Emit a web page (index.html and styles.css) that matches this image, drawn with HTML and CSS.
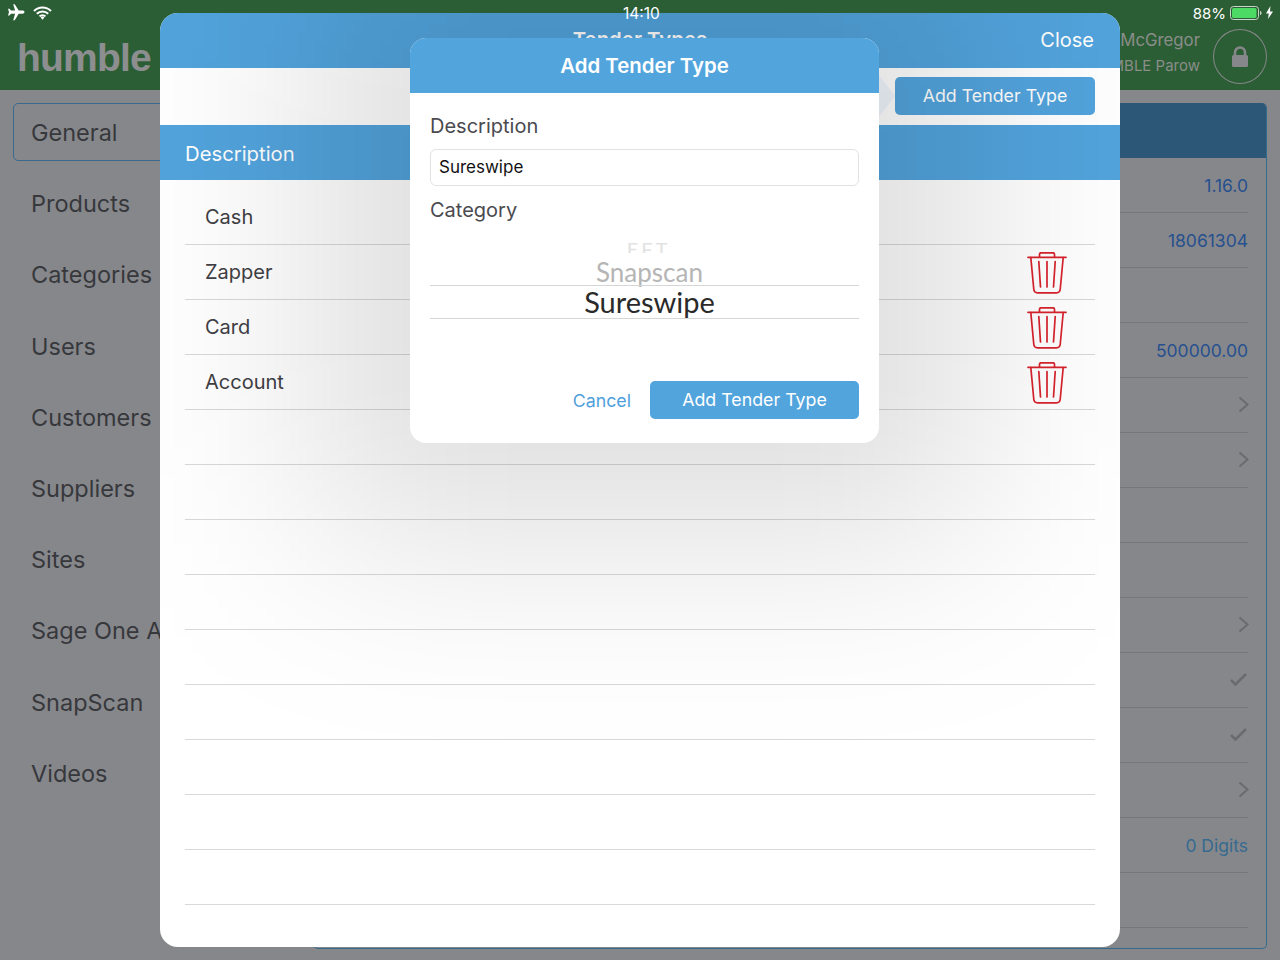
FILE: index.html
```html
<!DOCTYPE html>
<html lang="en">
<head>
  <meta charset="UTF-8">
  <title>Add Tender Type</title>
  <link rel="stylesheet" href="styles.css">
</head>
<body>

<div class="status">
  <div class="status-left">
    <svg width="18" height="17" viewBox="0 0 18 17"><path d="M6.2 0.3h1.5l4 6.2h3.6c1.2 0 2.2.6 2.2 1.6s-1 1.6-2.2 1.6h-3.6l-4 6.6H6.2l1.9-6.6H4L2.4 11.6H1l1-3.5-1-3.4h1.4L4 6.5h4.1z" fill="#fff"/></svg>
    <svg width="19" height="14" viewBox="0 0 19 14"><path d="M1 5a12 12 0 0 1 17 0M3.8 7.8a8 8 0 0 1 11.4 0M6.5 10.4a4.2 4.2 0 0 1 6 0" fill="none" stroke="#fff" stroke-width="2"/><path d="M7.6 11.6a2.6 2.6 0 0 1 3.8 0L9.5 13.8z" fill="#fff"/></svg>
  </div>
  <div class="status-time">14:10</div>
  <div class="status-right">
    <span>88%</span>
    <svg width="32" height="14" viewBox="0 0 32 14"><rect x="0.5" y="0.5" width="28" height="13" rx="3" fill="none" stroke="#c9d6cb"/><rect x="2" y="2" width="24.5" height="10" rx="1.5" fill="#4cd964"/><path d="M30 5v4c1 0 1.5-1 1.5-2s-.5-2-1.5-2z" fill="#c9d6cb"/></svg>
    <svg width="7" height="13" viewBox="0 0 7 13"><path d="M4.4 0L0 7.4h2.8L2 13l5-7.6H4z" fill="#fff"/></svg>
  </div>
</div>

<div class="topbar">
  <div class="logo">humble</div>
  <div class="user">
    <div class="user-text">
      <div class="user-name">McGregor</div>
      <div class="user-site">HUMBLE Parow</div>
    </div>
    <div class="lock">
      <svg width="18" height="22" viewBox="0 0 18 22"><path d="M4 10V6.500a5 5 0 0 1 10 0V10" fill="none" stroke="#86878b" stroke-width="2.600"/><rect x="1" y="9" width="16" height="12" rx="1.500" fill="#86878b"/></svg>
    </div>
  </div>
</div>

<div class="main">
  <ul class="menu">
    <li class="now">General</li>
    <li>Products</li>
    <li>Categories</li>
    <li>Users</li>
    <li>Customers</li>
    <li>Suppliers</li>
    <li>Sites</li>
    <li>Sage One Accounting</li>
    <li>SnapScan</li>
    <li>Videos</li>
  </ul>
  <div class="panel">
    <div class="panel-head"></div>
    <div class="panel-row">1.16.0</div>
    <div class="panel-row">18061304</div>
    <div class="panel-row"></div>
    <div class="panel-row">500000.00</div>
    <div class="panel-row"><svg class="chev" width="11" height="17" viewBox="0 0 11 17"><path d="M1.500 1.500l8 7-8 7" fill="none" stroke="#6a6b6f" stroke-width="2"/></svg></div>
    <div class="panel-row"><svg class="chev" width="11" height="17" viewBox="0 0 11 17"><path d="M1.500 1.500l8 7-8 7" fill="none" stroke="#6a6b6f" stroke-width="2"/></svg></div>
    <div class="panel-row"></div>
    <div class="panel-row"></div>
    <div class="panel-row"><svg class="chev" width="11" height="17" viewBox="0 0 11 17"><path d="M1.500 1.500l8 7-8 7" fill="none" stroke="#6a6b6f" stroke-width="2"/></svg></div>
    <div class="panel-row"><svg class="tick" width="17" height="13" viewBox="0 0 17 13"><path d="M1 7l4.500 4.500L16 1" fill="none" stroke="#6a6b6f" stroke-width="2.600"/></svg></div>
    <div class="panel-row"><svg class="tick" width="17" height="13" viewBox="0 0 17 13"><path d="M1 7l4.500 4.500L16 1" fill="none" stroke="#6a6b6f" stroke-width="2.600"/></svg></div>
    <div class="panel-row"><svg class="chev" width="11" height="17" viewBox="0 0 11 17"><path d="M1.500 1.500l8 7-8 7" fill="none" stroke="#6a6b6f" stroke-width="2"/></svg></div>
    <div class="panel-row digits">0 Digits</div>
    <div class="panel-row"></div>
  </div>
</div>

<div class="sheet">
  <div class="sheet-head">
    <span class="sheet-title">Tender Types</span>
    <span class="sheet-close">Close</span>
  </div>
  <div class="sheet-tools">
    <a href="#" class="btn tools-btn">Add Tender Type</a>
  </div>
  <div class="table-head">Description</div>
  <div class="table">
    <div class="table-row">Cash</div>
    <div class="table-row">Zapper
      <svg class="trash" width="40" height="42" viewBox="0 0 40 42"><use href="#bin"/></svg>
    </div>
    <div class="table-row">Card
      <svg class="trash" width="40" height="42" viewBox="0 0 40 42"><use href="#bin"/></svg>
    </div>
    <div class="table-row">Account
      <svg class="trash" width="40" height="42" viewBox="0 0 40 42"><use href="#bin"/></svg>
    </div>
    <div class="table-row"></div>
    <div class="table-row"></div>
    <div class="table-row"></div>
    <div class="table-row"></div>
    <div class="table-row"></div>
    <div class="table-row"></div>
    <div class="table-row"></div>
    <div class="table-row"></div>
    <div class="table-row"></div>
  </div>

  <div class="dialog-shade"></div>
  <div class="dialog">
    <div class="dialog-head">Add Tender Type</div>
    <div class="dialog-body">
      <div class="label">Description</div>
      <div class="input">Sureswipe</div>
      <div class="label label-cat">Category</div>
      <div class="picker">
        <div class="pick pick-far"><span>EFT</span></div>
        <div class="pick pick-near">Snapscan</div>
        <div class="pick pick-now">Sureswipe</div>
      </div>
      <div class="dialog-foot">
        <a href="#" class="cancel">Cancel</a>
        <a href="#" class="btn foot-btn">Add Tender Type</a>
      </div>
    </div>
  </div>
</div>

<svg class="defs" width="0" height="0">
  <g id="bin" fill="none" stroke="#d8232d" stroke-width="1.700" stroke-linecap="round">
    <path d="M1 5.300H39"/>
    <path d="M12.500 5V2.200Q12.500 .8 14 .8H26Q27.500 .8 27.500 2.200V5"/>
    <path d="M3.800 5.500L6.800 37.500Q7.200 40.800 10.500 40.800H29.500Q32.800 40.800 33.200 37.500L36.200 5.500"/>
    <path d="M11.800 9.500L13.500 35M20 9.500V35M28.200 9.500L26.500 35"/>
  </g>
</svg>

</body>
</html>
```

FILE: styles.css
```css
* {
  margin: 0;
  padding: 0;
  list-style: none;
  box-sizing: border-box;
}
body {
  width: 1280px;
  height: 960px;
  overflow: hidden;
  position: relative;
  background-color: #86878b;
  font-family: "Inter", "Liberation Sans", sans-serif;
  color: #37383c;
}
a {
  text-decoration: none;
}

/* status bar */
.status {
  position: absolute;
  top: 0;
  left: 0;
  width: 100%;
  height: 26px;
  padding: 4px 7px 0 7px;
  display: flex;
  justify-content: space-between;
  z-index: 10;
  color: #fff;
  font-size: 15px;
}
.status-left {
  display: flex;
  gap: 8px;
}
.status-left svg + svg {
  margin-top: 2px;
}
.status-time {
  position: absolute;
  left: 623px;
  top: 4px;
  font-size: 15.500px;
}
.status-right {
  display: flex;
  gap: 4px;
}
.status-right svg {
  margin-top: 2px;
}

/* green bar */
.topbar {
  height: 90px;
  background-color: #2c5e35;
  display: flex;
  justify-content: space-between;
  padding: 29px 13px 0 17px;
}
.logo {
  font-family: "Liberation Sans", sans-serif;
  font-weight: bold;
  font-size: 39px;
  letter-spacing: -.8px;
  line-height: 58px;
  color: #8d8e90;
}
.user {
  display: flex;
  gap: 13px;
}
.user-text {
  text-align: right;
  color: #8a8d8a;
}
.user-name {
  font-size: 16.800px;
  line-height: 22px;
}
.user-site {
  font-size: 15px;
  line-height: 18px;
  margin-top: 6px;
}
.lock {
  width: 54px;
  height: 55px;
  border: 1px solid #86878b;
  border-radius: 50%;
  display: flex;
  align-items: center;
  justify-content: center;
}

/* page behind the sheet */
.main {
  display: flex;
  padding: 13px 13px 0 13px;
}
.menu {
  width: 300px;
  display: flex;
  flex-direction: column;
  gap: 13.2px;
}
.menu li {
  height: 58px;
  line-height: 58px;
  padding-left: 17px;
  font-size: 23.500px;
  border: 1px solid transparent;
  white-space: nowrap;
}
.menu li.now {
  border-color: #3a6a8c;
  border-radius: 5px;
}
.panel {
  flex: 1;
  height: 846px;
  border: 1.500px solid #346a8e;
  border-top: 0;
  border-radius: 5px;
  overflow: hidden;
}
.panel-head {
  height: 55px;
  background-color: #2c5777;
}
.panel-row {
  height: 55px;
  margin-right: 18px;
  border-bottom: 1.500px solid #76777b;
  display: flex;
  align-items: center;
  justify-content: flex-end;
  font-size: 17.500px;
  color: #27508f;
}
.tick {
  margin: -2px 1px 0 0;
}
.chev {
  margin: -2px -1px 0 0;
}
.digits {
  color: #356a90;
}

/* tender types sheet */
.sheet {
  position: absolute;
  left: 160px;
  top: 13px;
  width: 960px;
  height: 934px;
  background-color: #fff;
  border-radius: 18px;
  overflow: hidden;
  z-index: 5;
}
.sheet-head {
  height: 55px;
  background-color: #52a4dd;
  color: #fff;
  position: relative;
  text-align: center;
}
.sheet-title {
  font-size: 20.400px;
  font-weight: 600;
  line-height: 54px;
}
.sheet-close {
  position: absolute;
  right: 26px;
  top: 13px;
  font-size: 20px;
  line-height: 28px;
}
.sheet-tools {
  height: 57px;
  padding: 9px 25px 0 0;
  display: flex;
  justify-content: flex-end;
}
.btn {
  display: block;
  height: 38px;
  line-height: 38px;
  text-align: center;
  color: #fff;
  background-color: #52a4dd;
  border-radius: 5px;
  font-size: 17.800px;
}
.tools-btn {
  width: 200px;
  position: relative;
}
/* pale arrow beside the button */
.tools-btn:before {
  content: "";
  position: absolute;
  left: -16px;
  top: -2px;
  border-left: 16px solid #f0f7fc;
  border-top: 21px solid transparent;
  border-bottom: 21px solid transparent;
}
.table-head {
  height: 55px;
  line-height: 57px;
  padding-left: 25px;
  background-color: #52a4dd;
  color: #fff;
  font-size: 20.300px;
}
.table {
  padding: 10px 25px 0 25px;
}
.table-row {
  height: 55px;
  padding-left: 20px;
  border-bottom: 1px solid #d9d9d9;
  display: flex;
  align-items: center;
  justify-content: space-between;
  font-size: 20px;
  color: #3f4045;
}
.trash {
  margin: 2px 28px 0 0;
}
.defs {
  position: absolute;
}

/* add dialog */
.dialog-shade {
  position: absolute;
  left: 150px;
  top: -75px;
  width: 669px;
  height: 605px;
  background-color: rgba(0,0,0,.125);
  filter: blur(100px);
}
.dialog {
  position: absolute;
  left: 250px;
  top: 25px;
  width: 469px;
  height: 405px;
  background-color: #fff;
  border-radius: 16px;
  overflow: hidden;
}
.dialog-head {
  height: 55px;
  line-height: 55px;
  text-align: center;
  background-color: #52a4dd;
  color: #fff;
  font-size: 20.400px;
  font-weight: 600;
}
.dialog-body {
  padding: 20px 20px 0 20px;
}
.label {
  font-size: 20px;
  line-height: 26px;
  color: #4a4a4f;
}
.label-cat {
  margin-top: 11px;
}
.input {
  height: 37px;
  line-height: 35px;
  margin-top: 10px;
  padding-left: 8px;
  border: 1px solid #e2e2e2;
  border-radius: 6px;
  font-size: 17px;
  color: #111;
}
.picker {
  height: 158px;
  padding-top: 16px;
  position: relative;
}
.pick {
  font-family: "Lato", sans-serif;
  text-align: center;
  white-space: nowrap;
}
.pick-far {
  height: 14px;
  overflow: hidden;
  font-size: 20px;
  line-height: 14px;
  color: #e2e2e2;
}
.pick-far span {
  display: inline-block;
  margin-top: 3px;
  margin-left: 8px;
  letter-spacing: 3px;
}
.pick-near {
  height: 32px;
  margin-left: 10px;
  padding-top: 4px;
  line-height: 30px;
  font-size: 26px;
  color: #b5b5b5;
}
.pick-now {
  height: 34px;
  margin-left: 10px;
  line-height: 33px;
  font-size: 29px;
  color: #2a2a2a;
}
/* lines of the picker */
.picker:before,
.picker:after {
  content: "";
  position: absolute;
  left: 0;
  right: 0;
  border-top: 1px solid #d6d6d6;
}
.picker:before {
  top: 62px;
}
.picker:after {
  top: 95px;
}
.dialog-foot {
  display: flex;
  justify-content: flex-end;
  align-items: center;
  gap: 19px;
}
.cancel {
  font-size: 17.800px;
  color: #4fa0dc;
}
.foot-btn {
  width: 209px;
}
```
